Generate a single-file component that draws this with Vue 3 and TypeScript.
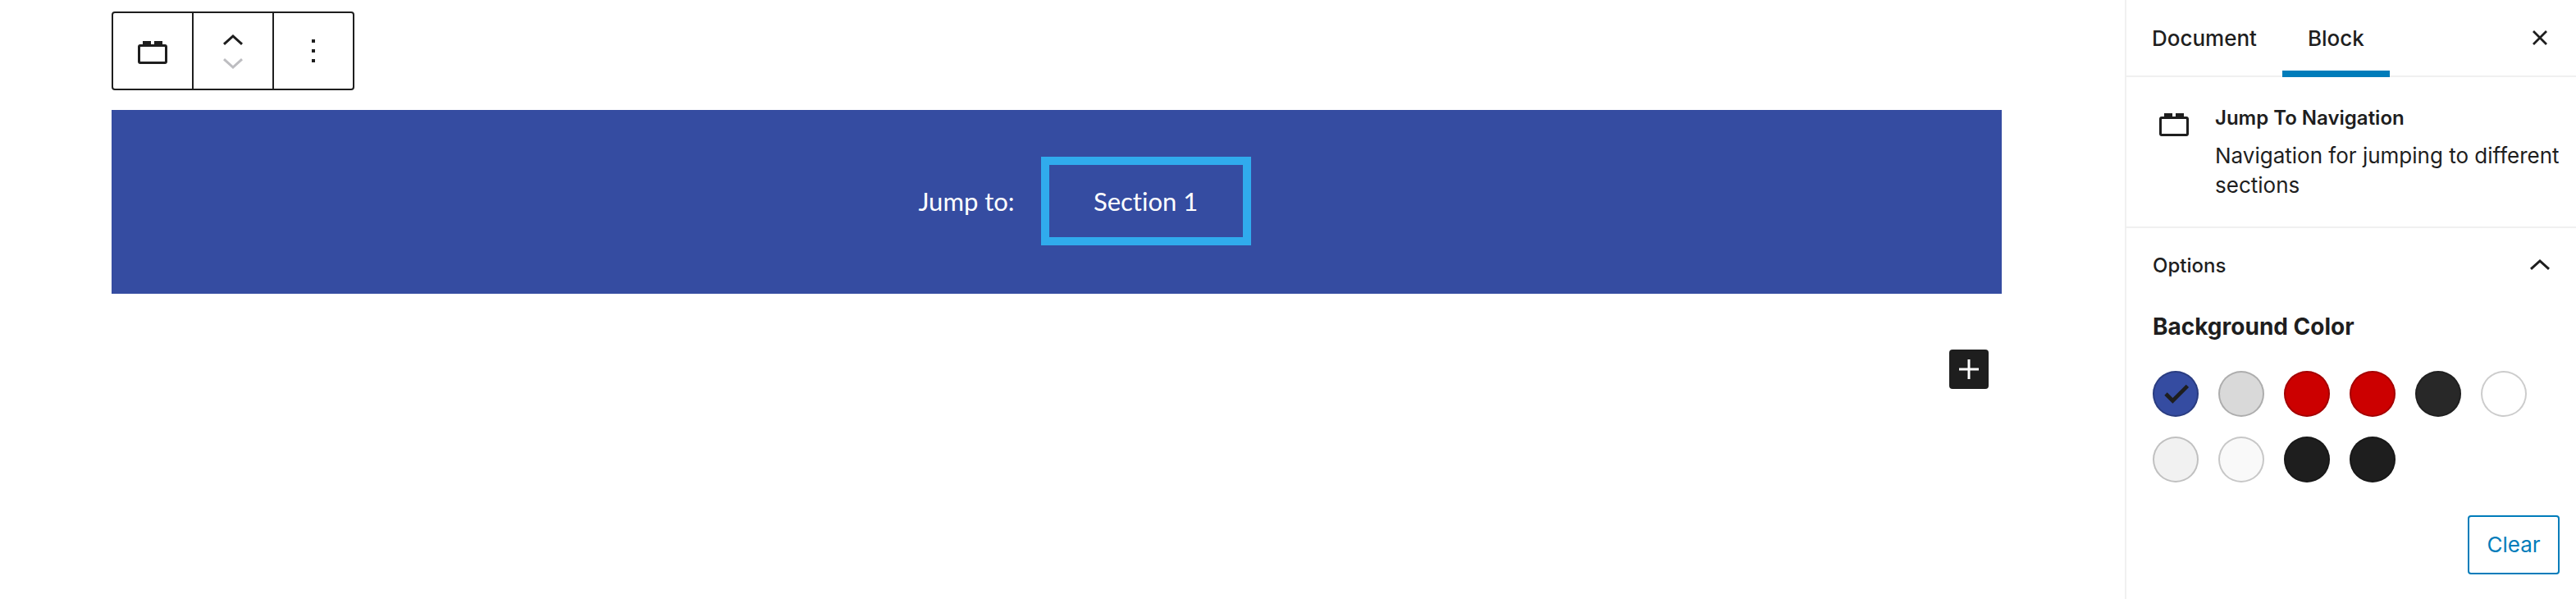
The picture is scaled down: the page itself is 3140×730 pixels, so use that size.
<script setup lang="ts">
import { ref } from 'vue'

interface Swatch {
  name: string
  color: string
}

const blockPath =
  'M19.6 8H18V6h-5v2h-2V6H6v2H4.4C3.6 8 3 8.6 3 9.4v9.2c0 .8.6 1.4 1.4 1.4h15.2c.8 0 1.4-.6 1.4-1.4V9.4c0-.8-.6-1.4-1.4-1.4zM19.5 18.2c0 .2-.1.3-.3.3H4.8c-.2 0-.3-.1-.3-.3V9.8c0-.2.1-.3.3-.3h14.4c.2 0 .3.1.3.3v8.4z'
const chevronUp = 'M12 8l-6 5.4 1 1.1 5-4.5 5 4.5 1-1.1z'
const chevronDown = 'M12 16l-6-5.4 1-1.1 5 4.5 5-4.5 1 1.1z'

const swatches: Swatch[] = [
  { name: 'Blue', color: '#354ca1' },
  { name: 'Gray', color: '#d9d9d9' },
  { name: 'Red', color: '#cc0000' },
  { name: 'Bright red', color: '#cc0000' },
  { name: 'Charcoal', color: '#282828' },
  { name: 'White', color: '#ffffff' },
  { name: 'Light gray', color: '#f1f1f1' },
  { name: 'Off white', color: '#f9f9f9' },
  { name: 'Black', color: '#1e1e1e' },
  { name: 'Dark', color: '#1e1e1e' },
]

const selected = ref<number>(0)
const optionsOpen = ref<boolean>(true)
</script>

<template>
  <div class="editor">
    <main class="canvas">
      <div class="toolbar" role="toolbar" aria-label="Block tools">
        <button class="tool" type="button" aria-label="Change block type">
          <svg class="icon" viewBox="0 0 24 24"><path fill-rule="evenodd" :d="blockPath" /></svg>
        </button>
        <div class="tool movers">
          <button class="mover" type="button" aria-label="Move up">
            <svg class="icon" viewBox="0 0 24 24"><path :d="chevronUp" /></svg>
          </button>
          <button class="mover" type="button" aria-label="Move down" disabled>
            <svg class="icon" viewBox="0 0 24 24"><path :d="chevronDown" /></svg>
          </button>
        </div>
        <button class="tool" type="button" aria-label="More options">
          <svg class="icon" viewBox="0 0 24 24">
            <path d="M11 5h2v2h-2zM11 11h2v2h-2zM11 17h2v2h-2z" />
          </svg>
        </button>
      </div>

      <nav class="banner" aria-label="Jump to">
        <span>Jump to:</span>
        <a class="jump-link" href="#section-1">Section 1</a>
      </nav>

      <button class="inserter" type="button" aria-label="Add block">
        <svg class="icon" viewBox="0 0 24 24">
          <path d="M18 11.25h-5.25V6h-1.5v5.25H6v1.5h5.25V18h1.5v-5.25H18z" />
        </svg>
      </button>
    </main>

    <aside class="sidebar">
      <header class="tabs">
        <button class="tab" type="button">Document</button>
        <button class="tab active" type="button">Block</button>
        <button class="close" type="button" aria-label="Close settings">
          <svg class="icon" viewBox="0 0 24 24">
            <path d="M8 8l8 8M16 8l-8 8" fill="none" stroke="currentColor" stroke-width="1.4" />
          </svg>
        </button>
      </header>

      <section class="card">
        <svg class="icon" viewBox="0 0 24 24"><path fill-rule="evenodd" :d="blockPath" /></svg>
        <div>
          <h2 class="card-title">Jump To Navigation</h2>
          <p class="card-text">Navigation for jumping to different sections</p>
        </div>
      </section>

      <section class="panel">
        <button
          class="panel-toggle"
          type="button"
          :aria-expanded="optionsOpen"
          @click="optionsOpen = !optionsOpen"
        >
          Options
          <svg class="icon" viewBox="0 0 24 24">
            <path :d="optionsOpen ? chevronUp : chevronDown" />
          </svg>
        </button>
        <div v-if="optionsOpen">
          <h3 class="label">Background Color</h3>
          <div class="swatches">
            <button
              v-for="(s, i) in swatches"
              :key="i"
              class="swatch"
              type="button"
              :aria-label="s.name"
              :aria-pressed="selected === i"
              :style="{ backgroundColor: s.color }"
              @click="selected = i"
            >
              <svg v-if="selected === i" class="icon" viewBox="0 0 20 20">
                <path d="M15.3 5.3l-6.8 6.8-2.8-2.8-1.4 1.4 4.2 4.2 8.2-8.2z" />
              </svg>
            </button>
          </div>
          <div class="actions">
            <button class="clear" type="button" @click="selected = -1">Clear</button>
          </div>
        </div>
      </section>
    </aside>
  </div>
</template>

<style>
body {
  margin: 0;
  background: #fff;
}
</style>

<style scoped>
.editor {
  display: flex;
  min-height: 100vh;
  color: #1e1e1e;
  font-family: Inter, 'Liberation Sans', sans-serif;
  font-size: 26px;
  line-height: 36px;
}

button {
  margin: 0;
  padding: 0;
  border: 0;
  background: none;
  color: inherit;
  font: inherit;
  cursor: pointer;
}

.icon {
  display: block;
  flex: none;
  width: 48px;
  height: 48px;
  fill: currentColor;
}

.canvas {
  display: flex;
  flex: 1;
  flex-direction: column;
  align-items: flex-start;
  padding: 14px 150px 0 136px;
}

.toolbar {
  display: flex;
  border: 2px solid #1e1e1e;
  border-radius: 4px;
}

.tool {
  display: flex;
  align-items: center;
  justify-content: center;
  width: 96px;
  height: 92px;
}

.tool + .tool {
  border-left: 2px solid #1e1e1e;
  box-sizing: content-box;
}

.tool.movers {
  flex-direction: column;
  height: 90px;
  padding-top: 2px;
}

.mover {
  display: flex;
  align-items: center;
  justify-content: center;
  width: 96px;
  height: 26px;
}

.mover:disabled {
  color: #bdbdc1;
  cursor: default;
}

.banner {
  display: flex;
  align-items: center;
  align-self: stretch;
  justify-content: center;
  gap: 32px;
  box-sizing: border-box;
  height: 224px;
  margin-top: 24px;
  padding: 0 0 2px 68px;
  background: #354ca1;
  color: #fff;
  font-family: Lato, 'Open Sans', sans-serif;
  font-size: 31px;
  font-variant-ligatures: none;
}

.jump-link {
  box-sizing: border-box;
  min-width: 256px;
  padding: 26px 54px;
  border: 10px solid #30abed;
  color: inherit;
  text-align: center;
  text-decoration: none;
}

.inserter {
  align-self: flex-end;
  margin: 68px 16px 0 0;
  border-radius: 4px;
  background: #1e1e1e;
  color: #fff;
}

.sidebar {
  flex: none;
  box-sizing: border-box;
  width: 550px;
  border-left: 2px solid #f0f0f0;
}

.tabs {
  display: flex;
  height: 92px;
  border-bottom: 2px solid #f0f0f0;
}

.tab {
  height: 94px;
  padding: 0 31px;
  font-weight: 500;
}

.tab.active {
  box-shadow: inset 0 -8px #007cba;
}

.close {
  margin: 0 20px 0 auto;
}

.card {
  display: flex;
  gap: 26px;
  padding: 32px 20px 32px 34px;
  border-bottom: 2px solid #f0f0f0;
}

.card-title {
  margin: 0 0 10px;
  font-size: 24px;
  font-weight: 600;
}

.card-text {
  margin: 0;
}

.panel {
  padding: 0 20px 30px 32px;
}

.panel-toggle {
  display: flex;
  align-items: center;
  justify-content: space-between;
  width: 100%;
  height: 92px;
  font-size: 24px;
  font-weight: 500;
}

.label {
  margin: 10px 0 36px;
  font-size: 28px;
  font-weight: 700;
}

.swatches {
  display: flex;
  flex-wrap: wrap;
  gap: 24px;
}

.swatch {
  display: flex;
  align-items: center;
  justify-content: center;
  width: 56px;
  height: 56px;
  border-radius: 50%;
  box-shadow: inset 0 0 0 2px rgba(0, 0, 0, 0.2);
}

.actions {
  display: flex;
  justify-content: flex-end;
  margin-top: 40px;
}

.clear {
  min-width: 112px;
  height: 72px;
  padding: 0 20px;
  border: 2px solid #007cba;
  border-radius: 4px;
  color: #007cba;
}
</style>
